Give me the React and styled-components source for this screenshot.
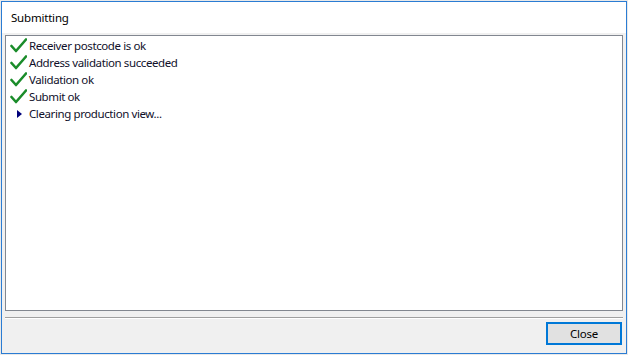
import React from "react";
import styled, { createGlobalStyle } from "styled-components";

const Global = createGlobalStyle`
  html, body { margin: 0; padding: 0; background: #e9e9e9; }
  body { width: 628px; height: 355px; overflow: hidden; font-family: "Noto Sans", "Open Sans", sans-serif; }
`;

const Desk = styled.div`
  width: 628px;
  height: 355px;
  padding: 1px;
  box-sizing: border-box;
  display: flex;
  flex-direction: column;
  align-items: flex-start;
`;

const Window = styled.div`
  width: 626px;
  height: 353px;
  box-sizing: border-box;
  border: 1px solid #2b7cd3;
  background: #f0f0f0;
  display: flex;
  flex-direction: column;
`;

const TitleBar = styled.div`
  height: 31px;
  background: #ffffff;
  display: flex;
  align-items: center;
  padding-left: 9px;
  font-size: 11.5px;
  letter-spacing: -0.2px;
  color: #000;
  flex: none;
`;

const Body = styled.div`
  flex: 1;
  display: flex;
  flex-direction: column;
  padding: 2px 3px 0 3px;
`;

const List = styled.div`
  height: 276px;
  box-sizing: border-box;
  border: 1px solid #828790;
  background: #fff;
  padding: 1px 0 0 3px;
  display: flex;
  flex-direction: column;
`;

const Row = styled.div`
  height: 17px;
  display: flex;
  align-items: center;
  font-size: 11.5px;
  letter-spacing: -0.4px;
  color: #10102a;
  white-space: nowrap;
`;

const IconBox = styled.span`
  width: 20px;
  height: 17px;
  display: flex;
  align-items: center;
  justify-content: ${p => (p.$center ? "center" : "flex-start")};
  padding-left: ${p => (p.$center ? "0" : "1px")};
  box-sizing: border-box;
  flex: none;
`;

const Separator = styled.div`
  margin-top: 6px;
  height: 1px;
  background: #a0a0a0;
  border-bottom: 1px solid #ffffff;
`;

const Footer = styled.div`
  display: flex;
  justify-content: flex-end;
  padding: 3px 1px 0 0;
`;

const Button = styled.button`
  width: 76px;
  height: 23px;
  box-sizing: border-box;
  border: 2px solid #0078d7;
  background: #e1e1e1;
  font-family: "Noto Sans", "Open Sans", sans-serif;
  font-size: 11.5px;
  letter-spacing: -0.2px;
  color: #000;
  padding: 0;
  margin: 0;
  display: flex;
  align-items: center;
  justify-content: center;
`;

const Check = () => (
  <svg width="17" height="15" viewBox="0 0 17 15">
    <path d="M1.5 8 L6 13 L16 1.5" fill="none" stroke="#1a8c2a" strokeWidth="2.6" strokeLinecap="round" strokeLinejoin="round" />
  </svg>
);

const Arrow = () => (
  <svg width="5" height="8" viewBox="0 0 5 8">
    <path d="M0 0 L5 4 L0 8 Z" fill="#00007a" />
  </svg>
);

const items = [
  { done: true, text: "Receiver postcode is ok" },
  { done: true, text: "Address validation succeeded" },
  { done: true, text: "Validation ok" },
  { done: true, text: "Submit ok" },
  { done: false, text: "Clearing production view..." },
];

export default function App() {
  return (
    <>
      <Global />
      <Desk>
        <Window>
          <TitleBar>Submitting</TitleBar>
          <Body>
            <List>
              {items.map((it, i) => (
                <Row key={i}>
                  <IconBox $center={!it.done}>{it.done ? <Check /> : <Arrow />}</IconBox>
                  {it.text}
                </Row>
              ))}
            </List>
            <Separator />
            <Footer>
              <Button>Close</Button>
            </Footer>
          </Body>
        </Window>
      </Desk>
    </>
  );
}
